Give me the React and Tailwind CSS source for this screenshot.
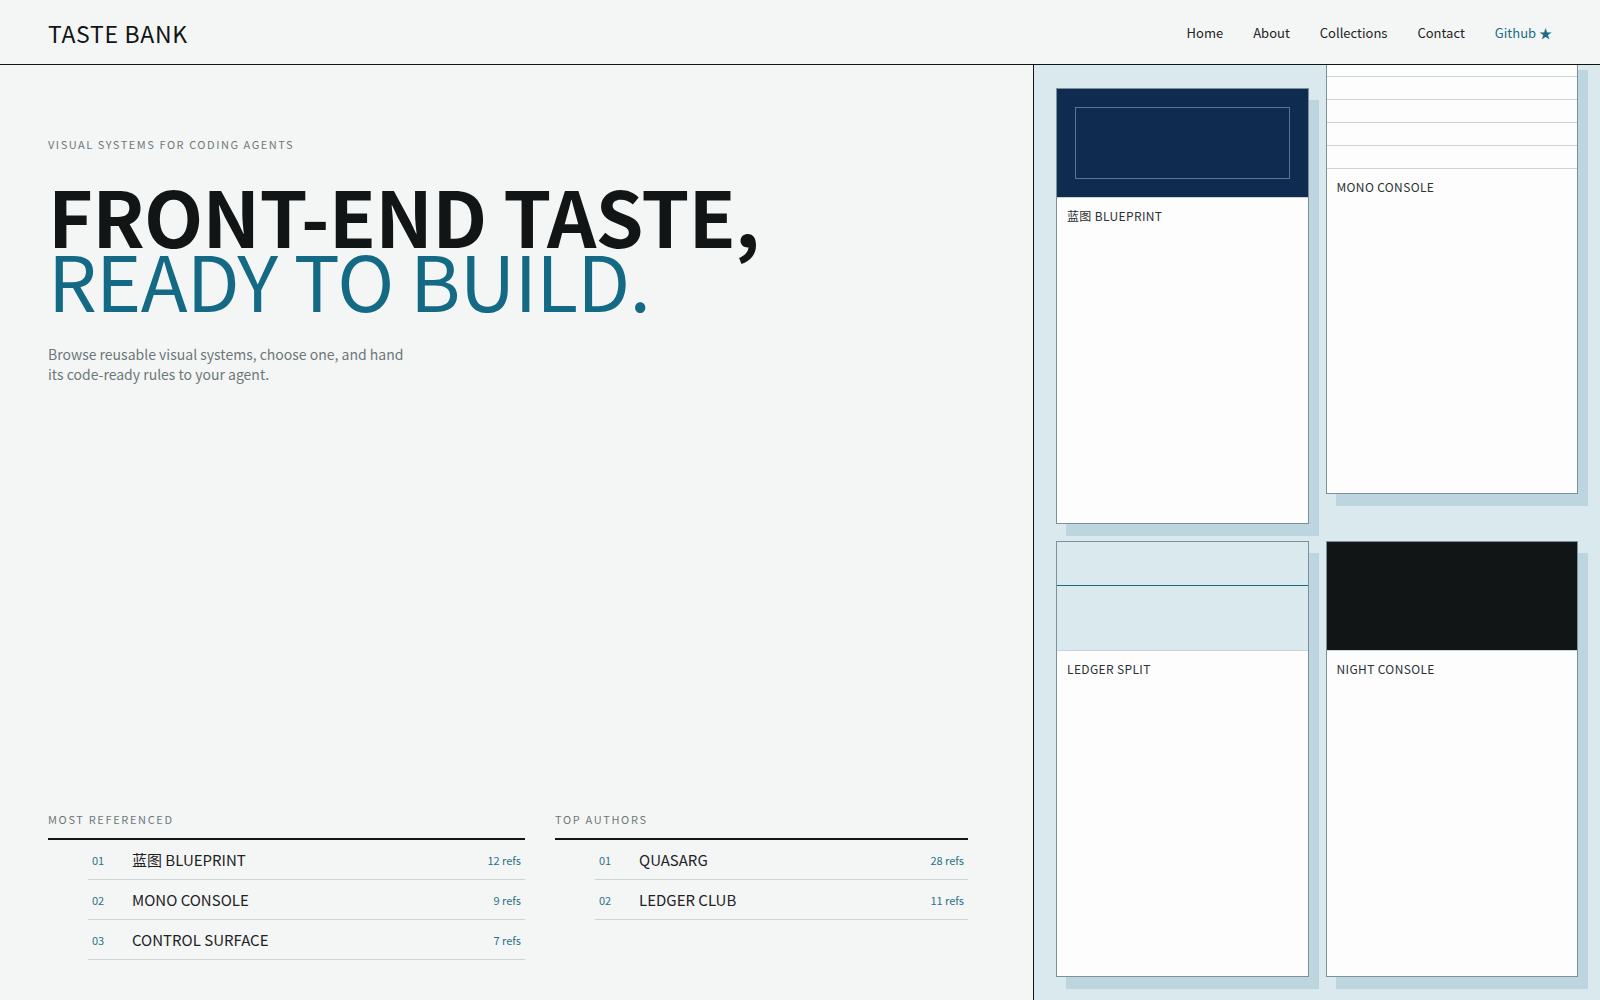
const NAV = ['Home', 'About', 'Collections', 'Contact']

const MOST_REFERENCED = [
  { n: '01', name: '蓝图 BLUEPRINT', refs: '12 refs' },
  { n: '02', name: 'MONO CONSOLE', refs: '9 refs' },
  { n: '03', name: 'CONTROL SURFACE', refs: '7 refs' },
]

const TOP_AUTHORS = [
  { n: '01', name: 'QUASARG', refs: '28 refs' },
  { n: '02', name: 'LEDGER CLUB', refs: '11 refs' },
]

function RankList({ title, items }) {
  return (
    <div>
      <h2 className="text-[11px] leading-4 tracking-[0.15em] text-[#6e7679] uppercase pb-[11px] border-b-2 border-[#121516]">
        {title}
      </h2>
      <ul className="ml-10">
        {items.map(it => (
          <li key={it.n} className="flex items-center h-[40px] border-b border-[#cfd4d5] px-1 pt-px">
            <span className="w-10 text-[11px] text-[#2a718b]">{it.n}</span>
            <span className="flex-1 text-[15px] text-[#1e2325]">{it.name}</span>
            <span className="text-[11px] text-[#2a718b]">{it.refs}</span>
          </li>
        ))}
      </ul>
    </div>
  )
}

function Card({ title, preview, lifted }) {
  return (
    <div
      className={`flex flex-col border border-[#7c9198] bg-[#fdfdfd] shadow-[10px_12px_0_#bcd5de] ${
        lifted ? '-translate-y-[30px]' : ''
      }`}
    >
      {preview}
      <p className="px-[10px] pt-[8px] text-[12px] leading-5 tracking-[0.03em] text-[#2a3133]">{title}</p>
    </div>
  )
}

const blueprintPreview = (
  <div className="h-[109px] shrink-0 box-border border-b border-[#c8d3d6] bg-[#0f2b50] p-[18px]">
    <div className="h-full border border-[#57779a]" />
  </div>
)

const monoPreview = (
  <div className="h-[110px] shrink-0 box-border border-b border-[#c8d3d6] bg-[#fdfdfd] pt-[17px] flex flex-col overflow-hidden">
    {[0, 1, 2, 3].map(i => (
      <div key={i} className="h-[23px] shrink-0 border-t border-[#c8d3d6]" />
    ))}
  </div>
)

const ledgerPreview = (
  <div className="h-[109px] shrink-0 box-border border-b border-[#c8d3d6] bg-[#dae9ee]">
    <div className="h-[44px] border-b border-[#1c6a84]" />
  </div>
)

const nightPreview = (
  <div className="h-[109px] shrink-0 box-border border-b border-[#c8d3d6] bg-[#111516]" />
)

export default function App() {
  return (
    <div className="h-screen flex flex-col bg-[#f4f6f5] text-[#121516] font-['Noto_Sans_CJK_SC',sans-serif] overflow-hidden">
      {/* Header */}
      <header className="h-[65px] shrink-0 flex items-center justify-between pl-12 pr-12 border-b border-[#121516] relative z-10 bg-[#f4f6f5]">
        <span className="text-[23px] leading-none tracking-[0.03em] text-[#121516] pt-[3px]">TASTE BANK</span>
        <nav className="flex items-center gap-[30px] text-[13px] text-[#1e2325] pt-px">
          {NAV.map(n => (
            <a key={n} href="#">{n}</a>
          ))}
          <a href="#" className="text-[#1b6b86]">Github ★</a>
        </nav>
      </header>

      <main className="flex-1 min-h-0 flex">
        {/* Left column */}
        <section className="w-[1034px] shrink-0 border-r border-[#121516] px-12 pt-[71px] pb-10 flex flex-col justify-between">
          <div>
            <p className="text-[11px] leading-4 tracking-[0.14em] text-[#6e7679] uppercase">
              Visual systems for coding agents
            </p>
            <h1 className="mt-[31px] text-[77px] leading-[64px] tracking-[-0.01em]">
              <span className="block font-bold text-[#121516]">FRONT-END TASTE,</span>
              <span className="block font-normal text-[#146a85]">READY TO BUILD.</span>
            </h1>
            <p className="mt-[33px] max-w-[360px] text-[14px] leading-5 text-[#6e7679]">
              Browse reusable visual systems, choose one, and hand its code-ready rules to your agent.
            </p>
          </div>

          <div className="grid grid-cols-[477px_413px] gap-[30px]">
            <RankList title="Most referenced" items={MOST_REFERENCED} />
            <RankList title="Top authors" items={TOP_AUTHORS} />
          </div>
        </section>

        {/* Right panel */}
        <aside className="flex-1 min-w-0 bg-[#dae9ee] px-[22px] py-[23px] grid grid-cols-2 grid-rows-2 gap-[17px] overflow-hidden">
          <Card title="蓝图 BLUEPRINT" preview={blueprintPreview} />
          <Card title="MONO CONSOLE" preview={monoPreview} lifted />
          <Card title="LEDGER SPLIT" preview={ledgerPreview} />
          <Card title="NIGHT CONSOLE" preview={nightPreview} />
        </aside>
      </main>
    </div>
  )
}
